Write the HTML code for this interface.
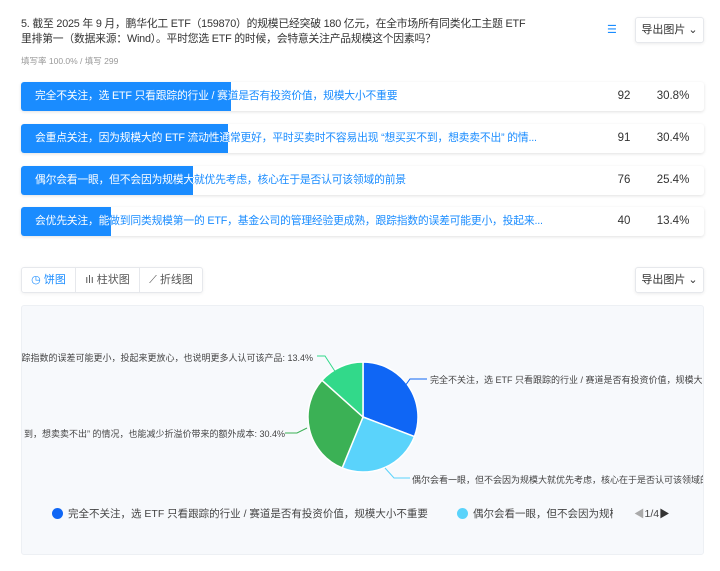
<!DOCTYPE html>
<html><head><meta charset="utf-8"><style>
*{margin:0;padding:0;box-sizing:border-box}
body{width:720px;height:571px;background:#fff;font-family:"Liberation Sans","Noto Sans CJK SC",sans-serif;position:relative;overflow:hidden;color:#333}
.abs{position:absolute}
.title{left:21px;top:17px;font-size:10.8px;line-height:15px;color:#333;white-space:nowrap;letter-spacing:-0.2px}
.sub{left:21px;top:55px;font-size:8.5px;color:#999}
.btn{border:1px solid #e6e8ec;border-radius:3px;background:#fff;font-size:11px;color:#333;box-shadow:0 1px 3px rgba(0,0,0,.08);text-align:center}
.row{left:21px;width:683px;height:29px;border-radius:3px;background:#fff;box-shadow:0 1px 3px rgba(0,0,0,.12);overflow:hidden}
.row .t{position:absolute;left:14px;top:0;line-height:29px;font-size:10.8px;white-space:nowrap;color:#1a8cff;letter-spacing:-0.2px}
.row .fill{position:absolute;left:0;top:0;height:29px;background:#1a8cff;overflow:hidden}
.row .fill .t{color:#fff}
.row .n{position:absolute;left:593px;width:20px;text-align:center;line-height:29px;font-size:11.5px;color:#333}
.row .p{position:absolute;left:632px;width:40px;text-align:center;line-height:29px;font-size:11.5px;color:#333}
.tabs{left:21px;top:267px;width:182px;height:26px;border:1px solid #e6e8ec;border-radius:3px;display:flex;font-size:11px;box-shadow:0 1px 3px rgba(0,0,0,.06)}
.tabs div{line-height:24px;text-align:center;border-right:1px solid #e6e8ec}
.panel{left:21px;top:305px;width:683px;height:250px;background:#f7f9fc;border:1px solid #edf0f4;border-radius:3px;overflow:hidden}
.lbl{font-size:9px;color:#444;white-space:nowrap;position:absolute}
</style></head><body>
<div class="abs title">5. 截至 2025 年 9 月，鹏华化工 ETF（159870）的规模已经突破 180 亿元，在全市场所有同类化工主题 ETF<br>里排第一（数据来源：Wind）。平时您选 ETF 的时候，会特意关注产品规模这个因素吗？</div>
<div class="abs" style="left:607px;top:23px;font-size:11px;color:#1a8cff">☰</div>
<div class="abs btn" style="left:635px;top:17px;width:69px;height:26px;line-height:24px">导出图片 ⌄</div>
<div class="abs sub">填写率 100.0% / 填写 299</div>

<div class="abs row" style="top:82px"><div class="t">完全不关注，选 ETF 只看跟踪的行业 / 赛道是否有投资价值，规模大小不重要</div><div class="fill" style="width:210px"><div class="t">完全不关注，选 ETF 只看跟踪的行业 / 赛道是否有投资价值，规模大小不重要</div></div><div class="n">92</div><div class="p">30.8%</div></div>
<div class="abs row" style="top:124px"><div class="t">会重点关注，因为规模大的 ETF 流动性通常更好，平时买卖时不容易出现 “想买买不到，想卖卖不出” 的情...</div><div class="fill" style="width:207px"><div class="t">会重点关注，因为规模大的 ETF 流动性通常更好，平时买卖时不容易出现 “想买买不到，想卖卖不出” 的情...</div></div><div class="n">91</div><div class="p">30.4%</div></div>
<div class="abs row" style="top:166px"><div class="t">偶尔会看一眼，但不会因为规模大就优先考虑，核心在于是否认可该领域的前景</div><div class="fill" style="width:172px"><div class="t">偶尔会看一眼，但不会因为规模大就优先考虑，核心在于是否认可该领域的前景</div></div><div class="n">76</div><div class="p">25.4%</div></div>
<div class="abs row" style="top:207px"><div class="t">会优先关注，能做到同类规模第一的 ETF，基金公司的管理经验更成熟，跟踪指数的误差可能更小，投起来...</div><div class="fill" style="width:90px"><div class="t">会优先关注，能做到同类规模第一的 ETF，基金公司的管理经验更成熟，跟踪指数的误差可能更小，投起来...</div></div><div class="n">40</div><div class="p">13.4%</div></div>

<div class="abs tabs"><div style="width:54px;color:#1a8cff">◷ 饼图</div><div style="width:64px;color:#555">ılı 柱状图</div><div style="width:62px;border-right:none;color:#555">⟋ 折线图</div></div>
<div class="abs btn" style="left:635px;top:267px;width:69px;height:26px;line-height:24px">导出图片 ⌄</div>

<div class="abs panel">
<svg width="683" height="250" style="position:absolute;left:0;top:0">
<g transform="translate(341,111)" stroke="#fff" stroke-width="1.5">
<path d="M0,0 L0,-55 A55,55 0 0 1 51.4,19.6 Z" fill="#0f66f5"/>
<path d="M0,0 L51.4,19.6 A55,55 0 0 1 -20.8,50.9 Z" fill="#5ad3fb"/>
<path d="M0,0 L-20.8,50.9 A55,55 0 0 1 -41,-36.7 Z" fill="#3bb155"/>
<path d="M0,0 L-41,-36.7 A55,55 0 0 1 0,-55 Z" fill="#32d98a"/>
</g>
<g fill="none" stroke-width="1">
<path d="M295,50 L303,50 L316,70" stroke="#32d98a"/>
<path d="M383,80 L388,73 L405,73" stroke="#0f66f5"/>
<path d="M263,127 L275,127 L285,122" stroke="#3bb155"/>
<path d="M363,162 L372,172 L388,172" stroke="#5ad3fb"/>
</g>
</svg>
<div class="lbl" style="right:390px;top:45px">跟踪指数的误差可能更小，投起来更放心，也说明更多人认可该产品: 13.4%</div>
<div class="lbl" style="left:408px;top:67px">完全不关注，选 ETF 只看跟踪的行业 / 赛道是否有投资价值，规模大小不重要</div>
<div class="lbl" style="right:418px;top:121px">到，想卖卖不出” 的情况，也能减少折溢价带来的额外成本: 30.4%</div>
<div class="lbl" style="left:390px;top:167px">偶尔会看一眼，但不会因为规模大就优先考虑，核心在于是否认可该领域的前景</div>
<div class="abs" style="left:30px;top:202px;width:11px;height:11px;border-radius:50%;background:#0f66f5"></div>
<div class="lbl" style="left:46px;top:200px;font-size:10.5px">完全不关注，选 ETF 只看跟踪的行业 / 赛道是否有投资价值，规模大小不重要</div>
<div class="abs" style="left:435px;top:202px;width:11px;height:11px;border-radius:50%;background:#5ad3fb"></div>
<div class="abs" style="left:451px;top:200px;width:140px;overflow:hidden;font-size:10.5px;white-space:nowrap;color:#444">偶尔会看一眼，但不会因为规模大就优先考虑</div>
<div class="lbl" style="left:612px;top:200px;font-size:10.5px"><span style="color:#aaa">◀</span>1/4<span style="color:#333">▶</span></div>
</div>
</body></html>
